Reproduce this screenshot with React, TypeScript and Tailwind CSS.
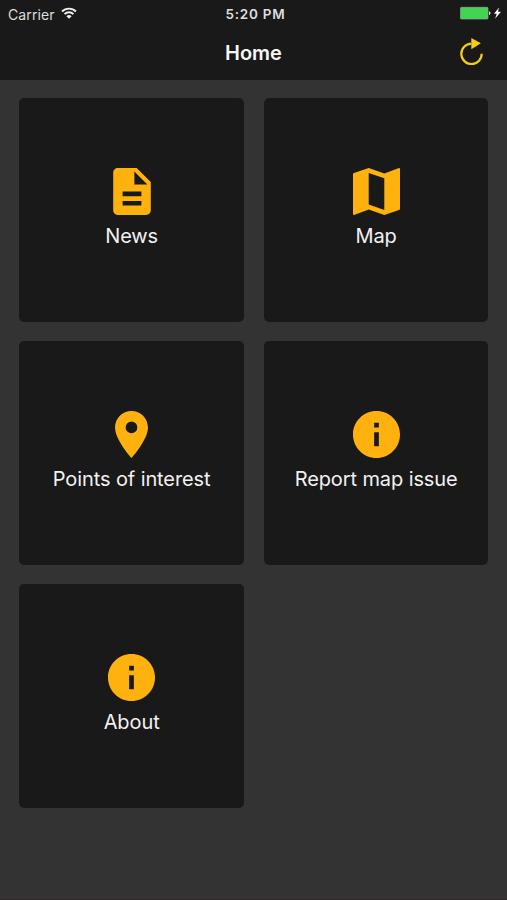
import type { ReactNode } from "react";

const amber = "fill-[#ffb20d]";

function InfoIcon() {
  return (
    <svg viewBox="2 2 20 20" className={`h-[47px] w-[47px] ${amber}`}>
      <path d="M12 2C6.48 2 2 6.48 2 12s4.48 10 10 10 10-4.48 10-10S17.52 2 12 2zm1 15h-2v-6h2v6zm0-8h-2V7h2v2z" />
    </svg>
  );
}

function NewsIcon() {
  return (
    <svg viewBox="4 2 16 20" className={`h-[47px] w-[38px] ${amber}`}>
      <path d="M14 2H6c-1.1 0-1.99.9-1.99 2L4 20c0 1.1.89 2 1.99 2H18c1.1 0 2-.9 2-2V8l-6-6zm2 16H8v-2h8v2zm0-4H8v-2h8v2zm-3-5V3.5L18.5 9H13z" />
    </svg>
  );
}

function MapIcon() {
  return (
    <svg viewBox="0 0 47 47" className={`h-[47px] w-[47px] ${amber}`}>
      <path fillRule="evenodd" d="M0 5.8 1 5 15.7 0l15.6 5.4L46 0l1 .5v40.7l-1 .7L31.3 47l-15.6-5.4L1 47l-1-.6zM15.7 5v31.6l15.6 5.3V10.3z" />
    </svg>
  );
}

function PinIcon() {
  return (
    <svg viewBox="5 2 14 20" className={`h-[47px] w-[33px] ${amber}`}>
      <path d="M12 2C8.13 2 5 5.13 5 9c0 5.25 7 13 7 13s7-7.75 7-13c0-3.87-3.13-7-7-7zm0 9.5a2.5 2.5 0 0 1 0-5 2.5 2.5 0 0 1 0 5z" />
    </svg>
  );
}

function Tile({ icon, label }: { icon: ReactNode; label: string }) {
  return (
    <button className="flex h-[224.5px] flex-col items-center rounded-[5px] bg-[#191919] pt-[70.7px]">
      {icon}
      <span className="mt-[6.8px] text-[20px] leading-[28px] tracking-[-0.1px] whitespace-nowrap text-[#f2f2f2]">{label}</span>
    </button>
  );
}

export default function App() {
  return (
    <div className="flex h-[900px] w-[507px] flex-col overflow-hidden border-b border-[#302628] bg-[#333333] font-['Inter','Liberation_Sans',sans-serif]">
      <header className="h-[79.5px] shrink-0 bg-[#191919]">
        <div className="grid h-[28px] grid-cols-3 items-center pr-[5px] pl-[8px] text-[#dedede]">
          <div className="flex items-center gap-[6px]">
            <span className="text-[14px] tracking-[0.1px]">Carrier</span>
            <svg viewBox="0 0 16 12" className="mb-[2px] h-[12px] w-[16px] fill-none stroke-[#eeeeee]" strokeWidth="1.9">
              <path d="M1 4.5a10 10 0 0 1 14 0M3.5 7.1a6.4 6.4 0 0 1 9 0" />
              <path d="m8 11.8-2.6-2.5a3.7 3.7 0 0 1 5.2 0z" className="fill-[#eeeeee] stroke-none" />
            </svg>
          </div>
          <span className="pl-px text-center text-[13.5px] font-semibold tracking-[0.75px]">5:20 PM</span>
          <div className="flex items-center justify-end">
            <svg viewBox="0 0 42 14" className="mb-[2px] h-[14px] w-[42px]">
              <rect x=".5" y="1.3" width="27.5" height="11.7" rx="1" className="fill-[#43d551] stroke-[#91a892]" strokeWidth=".7" />
              <path d="M29 5.3c2 .5 2 3.2 0 3.7z" className="fill-[#dedede]" />
              <path d="m39 1.5-5 6.3h2.8L35 12.8l6-7h-3z" className="fill-white" />
            </svg>
          </div>
        </div>
        <div className="grid h-[50px] grid-cols-3 items-center pr-[22px] pl-[22px]">
          <span />
          <h1 className="text-center text-[20px] leading-[28px] font-semibold text-[#f7f7f7]">Home</h1>
          <button className="justify-self-end" aria-label="Refresh">
            <svg viewBox="0 0 26 30" className="h-[30px] w-[26px]">
              <path d="M12.3 5.6A10.2 10.2 0 1 0 22.7 15.7" className="fill-none stroke-[#f6cb19]" strokeWidth="2.2" />
              <path d="M12.3 0v11.3l9.6-6z" className="fill-[#f6cb19]" />
            </svg>
          </button>
        </div>
      </header>
      <main className="grid grid-cols-[224.5px_224.5px] gap-x-[20px] gap-y-[18.5px] pt-[18px] pl-[19.4px]">
        <Tile icon={<NewsIcon />} label="News" />
        <Tile icon={<MapIcon />} label="Map" />
        <Tile icon={<PinIcon />} label="Points of interest" />
        <Tile icon={<InfoIcon />} label="Report map issue" />
        <Tile icon={<InfoIcon />} label="About" />
      </main>
    </div>
  );
}
